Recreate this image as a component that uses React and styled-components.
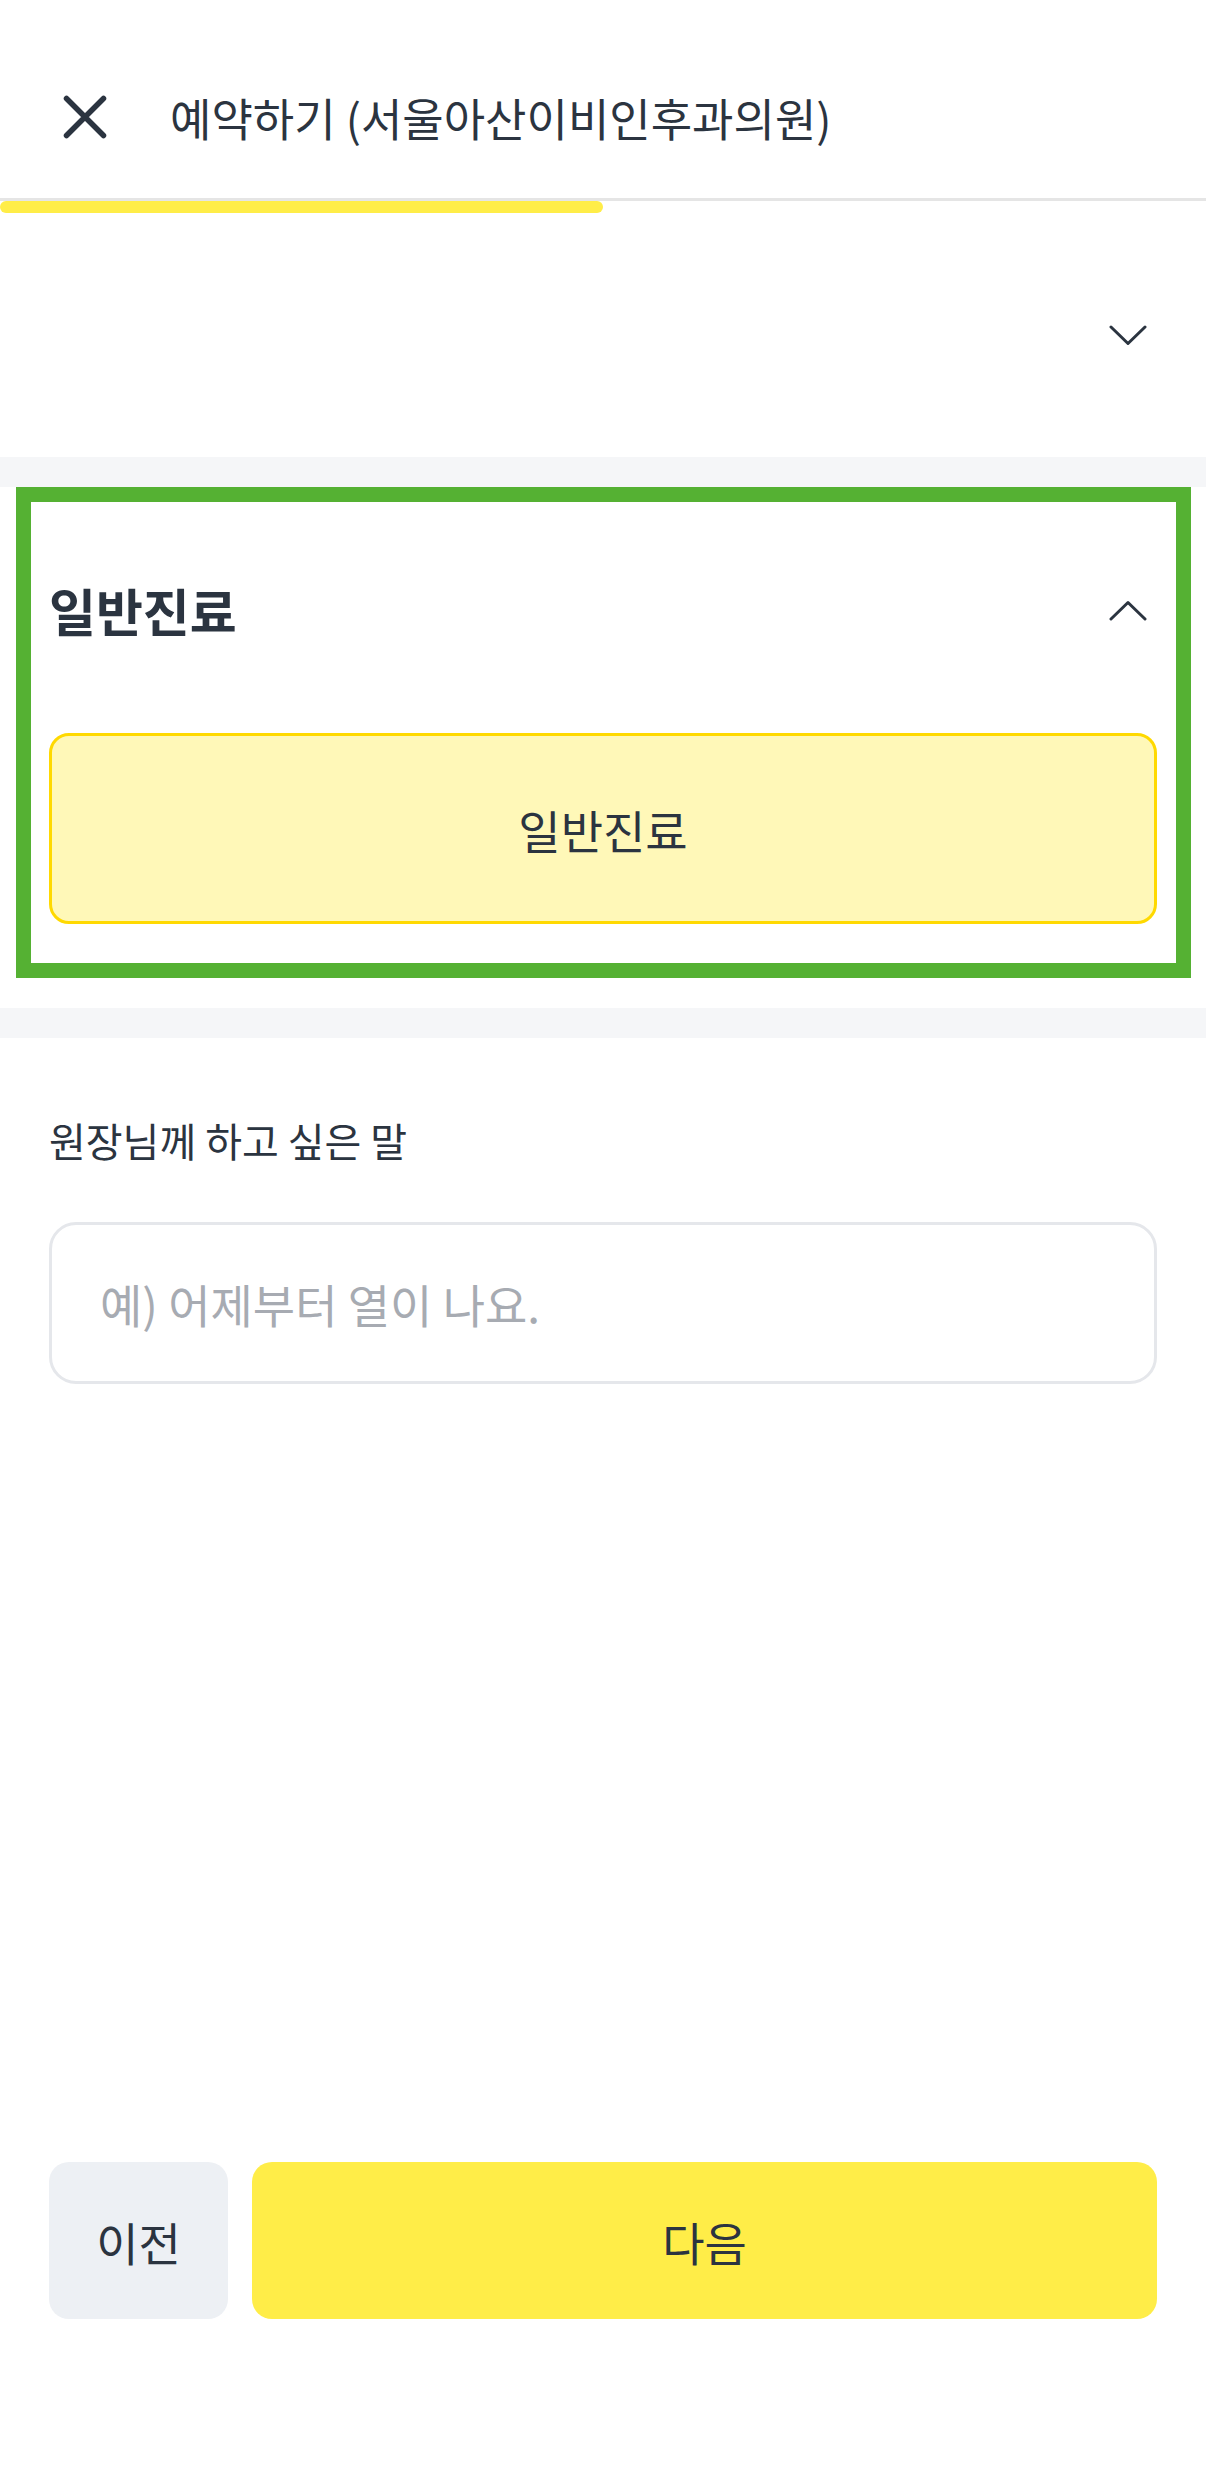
import React from "react";
import styled, { createGlobalStyle } from "styled-components";

const GlobalStyle = createGlobalStyle`
  html, body {
    margin: 0;
    padding: 0;
    background: #ffffff;
  }
  body {
    font-family: "Noto Sans CJK KR", "Noto Sans", sans-serif;
    color: #2b3440;
  }
  * { box-sizing: border-box; }
`;

const Page = styled.div`
  min-height: 100vh;
  display: flex;
  flex-direction: column;
  background: #ffffff;
`;

const Header = styled.header`
  height: 201px;
  padding: 36px 0 0 63px;
  display: flex;
  align-items: center;
  gap: 63px;
  border-bottom: 3px solid #e5e5e5;
`;

const CloseButton = styled.button`
  width: 44px;
  height: 44px;
  padding: 0;
  border: 0;
  background: none;
  display: flex;
  align-items: center;
  justify-content: center;
  color: #2b3440;
`;

const Title = styled.h1`
  margin: 0;
  font-size: 45px;
  font-weight: 400;
  line-height: 1;
  color: #2b3440;
`;

const ProgressTrack = styled.div`
  height: 12px;
  width: 100%;
`;

const ProgressFill = styled.div`
  height: 100%;
  background: #ffed48;
  border-radius: 6px;
`;

const Band = styled.div`
  height: 30px;
  background: #f5f6f8;
`;

const Accordion = styled.section`
  position: relative;
  padding: 0 49px ${(p) => (p.$open ? "84px" : "0")};
  background: #ffffff;
`;

const AccordionHeader = styled.div`
  height: ${(p) => (p.$open ? "246px" : "244px")};
  display: flex;
  align-items: center;
  justify-content: space-between;
`;

const AccordionTitle = styled.h2`
  margin: 0;
  font-size: 51px;
  font-weight: 700;
  line-height: 1;
  color: #2b3440;
`;

const ChevronBox = styled.span`
  margin-right: 10px;
  display: flex;
  align-items: center;
  margin-left: auto;
`;

const OptionCard = styled.button`
  width: 100%;
  height: 191px;
  display: flex;
  align-items: center;
  justify-content: center;
  border-radius: 20px;
  border: 3px solid ${(p) => (p.$selected ? "#ffd900" : "#e5e7eb")};
  background: ${(p) => (p.$selected ? "#fff8b8" : "#ffffff")};
  font-family: inherit;
  font-size: 46px;
  font-weight: 400;
  color: #2b3440;
  padding: 0;
`;

const Highlight = styled.div`
  position: absolute;
  top: 0;
  left: 16px;
  right: 15px;
  height: 491px;
  border: 15px solid #55b133;
  pointer-events: none;
`;

const MessageSection = styled.section`
  padding: 76px 49px 0;
`;

const Label = styled.label`
  display: block;
  font-size: 40px;
  line-height: 52px;
  color: #2b3440;
  margin-bottom: 56px;
`;

const MessageInput = styled.input`
  width: 100%;
  height: 162px;
  border: 3px solid #e5e7eb;
  border-radius: 27px;
  padding: 0 48px;
  font-family: inherit;
  font-size: 46px;
  color: #2b3440;
  outline: none;
  background: #ffffff;
  &::placeholder {
    color: #a7abb2;
  }
`;

const Footer = styled.footer`
  margin-top: auto;
  padding: 0 49px 150px;
  display: flex;
  gap: 24px;
`;

const FooterButton = styled.button`
  height: 157px;
  border: 0;
  border-radius: 20px;
  font-family: inherit;
  font-size: 46px;
  color: #2b3440;
  display: flex;
  align-items: center;
  justify-content: center;
  padding: 0;
  width: ${(p) => (p.$primary ? "auto" : "179px")};
  flex: ${(p) => (p.$primary ? "1" : "none")};
  background: ${(p) => (p.$primary ? "#ffed48" : "#edf0f4")};
`;

const CloseIcon = () => (
  <svg width="44" height="44" viewBox="0 0 44 44" fill="none">
    <path
      d="M3.5 3.5 L40.5 40.5 M40.5 3.5 L3.5 40.5"
      stroke="currentColor"
      strokeWidth="5.5"
      strokeLinecap="round"
    />
  </svg>
);

const Chevron = ({ up }) => (
  <svg width="38" height="21" viewBox="0 0 38 21" fill="none">
    <polyline
      points={up ? "2,19 19,2.5 36,19" : "2,2 19,18.5 36,2"}
      stroke="#2b3440"
      strokeWidth="3"
      strokeLinecap="round"
      strokeLinejoin="round"
    />
  </svg>
);

export default function App() {
  const progress = 50;
  return (
    <>
      <GlobalStyle />
      <Page>
        <Header>
          <CloseButton aria-label="닫기">
            <CloseIcon />
          </CloseButton>
          <Title>예약하기 (서울아산이비인후과의원)</Title>
        </Header>
        <ProgressTrack>
          <ProgressFill style={{ width: `${progress}%` }} />
        </ProgressTrack>

        <Accordion>
          <AccordionHeader>
            <ChevronBox>
              <Chevron />
            </ChevronBox>
          </AccordionHeader>
        </Accordion>

        <Band />

        <Accordion $open>
          <AccordionHeader $open>
            <AccordionTitle>일반진료</AccordionTitle>
            <ChevronBox>
              <Chevron up />
            </ChevronBox>
          </AccordionHeader>
          <OptionCard $selected>일반진료</OptionCard>
          <Highlight />
        </Accordion>

        <Band />

        <MessageSection>
          <Label htmlFor="memo">원장님께 하고 싶은 말</Label>
          <MessageInput id="memo" placeholder="예) 어제부터 열이 나요." />
        </MessageSection>

        <Footer>
          <FooterButton>이전</FooterButton>
          <FooterButton $primary>다음</FooterButton>
        </Footer>
      </Page>
    </>
  );
}
